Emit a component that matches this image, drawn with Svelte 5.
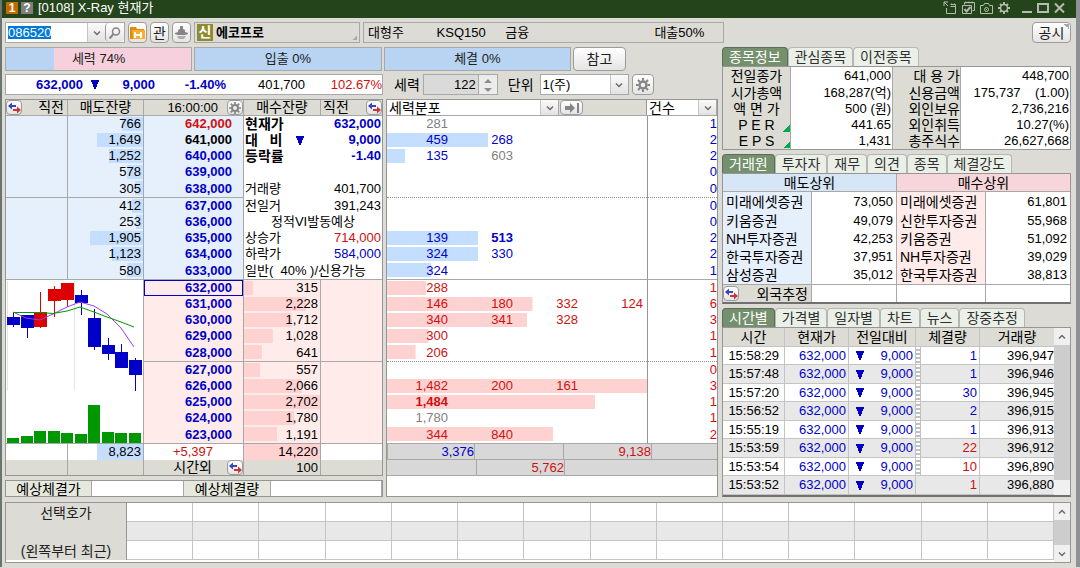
<script lang="ts">
  type Tone = 'blue' | 'red' | 'black' | 'gray';
  type Level = { price: string; qty: number; tone?: Tone };
  type DistRow = { values: string[]; bar: number; count: number; gray?: number[]; bold?: number };

  const MAX_QTY = 2702;

  const asks: Level[] = [
    { price: '642,000', qty: 766, tone: 'red' },
    { price: '641,000', qty: 1649, tone: 'black' },
    { price: '640,000', qty: 1252 },
    { price: '639,000', qty: 578 },
    { price: '638,000', qty: 305 },
    { price: '637,000', qty: 412 },
    { price: '636,000', qty: 253 },
    { price: '635,000', qty: 1905 },
    { price: '634,000', qty: 1123 },
    { price: '633,000', qty: 580 }
  ];

  const bids: Level[] = [
    { price: '632,000', qty: 315 },
    { price: '631,000', qty: 2228 },
    { price: '630,000', qty: 1712 },
    { price: '629,000', qty: 1028 },
    { price: '628,000', qty: 641 },
    { price: '627,000', qty: 557 },
    { price: '626,000', qty: 2066 },
    { price: '625,000', qty: 2702 },
    { price: '624,000', qty: 1780 },
    { price: '623,000', qty: 1191 }
  ];

  const facts: { label: string; value?: string; tone?: Tone; bold?: boolean; mark?: boolean; center?: boolean }[] = [
    { label: '현재가', value: '632,000', tone: 'blue', bold: true },
    { label: '대\u00a0\u00a0\u00a0비', value: '9,000', tone: 'blue', bold: true, mark: true },
    { label: '등락률', value: '-1.40', tone: 'blue', bold: true },
    { label: '' },
    { label: '거래량', value: '401,700' },
    { label: '전일거', value: '391,243' },
    { label: '정적VI발동예상', center: true },
    { label: '상승가', value: '714,000', tone: 'red' },
    { label: '하락가', value: '584,000', tone: 'blue' },
    { label: '일반(\u00a0 40% )/신용가능' }
  ];

  // bar is the share of the four value columns, in percent
  const dist: DistRow[] = [
    { values: ['281'], bar: 0, count: 1, gray: [0] },
    { values: ['459', '268'], bar: 39, count: 2 },
    { values: ['135', '603'], bar: 7, count: 2, gray: [1] },
    { values: [], bar: 0, count: 0 },
    { values: [], bar: 0, count: 0 },
    { values: [], bar: 0, count: 0 },
    { values: [], bar: 0, count: 0 },
    { values: ['139', '513'], bar: 35, count: 2, bold: 1 },
    { values: ['324', '330'], bar: 35, count: 2 },
    { values: ['324'], bar: 17, count: 1 },
    { values: ['288'], bar: 15, count: 1 },
    { values: ['146', '180', '332', '124'], bar: 56, count: 6 },
    { values: ['340', '341', '328'], bar: 54, count: 3 },
    { values: ['300'], bar: 16, count: 1 },
    { values: ['206'], bar: 11, count: 1 },
    { values: [], bar: 0, count: 0 },
    { values: ['1,482', '200', '161'], bar: 100, count: 3 },
    { values: ['1,484'], bar: 80, count: 1, bold: 0 },
    { values: ['1,780'], bar: 0, count: 1, gray: [0] },
    { values: ['344', '840'], bar: 64, count: 2 }
  ];

  const candles = [
    { up: false, top: 317, bottom: 325, high: 313, low: 327, vol: 438 },
    { up: false, top: 315, bottom: 328, high: 315, low: 338, vol: 436 },
    { up: true, top: 312, bottom: 327, high: 292, low: 328, vol: 431 },
    { up: true, top: 289, bottom: 301, high: 286, low: 317, vol: 431 },
    { up: true, top: 283, bottom: 300, high: 283, low: 307, vol: 433 },
    { up: false, top: 295, bottom: 303, high: 290, low: 315, vol: 434 },
    { up: false, top: 318, bottom: 347, high: 309, low: 350, vol: 405 },
    { up: false, top: 345, bottom: 354, high: 338, low: 360, vol: 432 },
    { up: false, top: 352, bottom: 368, high: 344, low: 368, vol: 433 },
    { up: false, top: 360, bottom: 375, high: 358, low: 391, vol: 433 }
  ];

  const summary = [
    ['전일종가', '641,000', '대 용 가', '448,700'],
    ['시가총액', '168,287(억)', '신용금액', '175,737\u00a0\u00a0\u00a0 (1.00)'],
    ['액 면 가', '500 (원)', '외인보유', '2,736,216'],
    ['P E R', '441.65', '외인취득', '10.27(%)'],
    ['E P S', '1,431', '총주식수', '26,627,668']
  ];

  const brokers = [
    ['미래에셋증권', '73,050', '미래에셋증권', '61,801'],
    ['키움증권', '49,079', '신한투자증권', '55,968'],
    ['NH투자증권', '42,253', '키움증권', '51,092'],
    ['한국투자증권', '37,951', 'NH투자증권', '39,029'],
    ['삼성증권', '35,012', '한국투자증권', '38,813']
  ];

  const ticks: { time: string; vol: string; total: string; tone: Tone }[] = [
    { time: '15:58:29', vol: '1', total: '396,947', tone: 'blue' },
    { time: '15:57:48', vol: '1', total: '396,946', tone: 'blue' },
    { time: '15:57:20', vol: '30', total: '396,945', tone: 'blue' },
    { time: '15:56:52', vol: '2', total: '396,915', tone: 'blue' },
    { time: '15:55:19', vol: '1', total: '396,913', tone: 'blue' },
    { time: '15:53:59', vol: '22', total: '396,912', tone: 'red' },
    { time: '15:53:54', vol: '10', total: '396,890', tone: 'red' },
    { time: '15:53:52', vol: '1', total: '396,880', tone: 'red' }
  ];

  const infoTabs = ['종목정보', '관심종목', '이전종목'];
  const brokerTabs = ['거래원', '투자자', '재무', '의견', '종목', '체결강도'];
  const tickTabs = ['시간별', '가격별', '일자별', '차트', '뉴스', '장중추정'];

  let infoTab = $state(0);
  let brokerTab = $state(0);
  let tickTab = $state(0);
  let code = $state('086520');

  const fmt = (n: number) => n.toLocaleString('en-US');
  const share = (qty: number, max = MAX_QTY) => Math.round((qty / max) * 100);
</script>

{#snippet swap(label: string)}
  <button type="button" class="btn swap" aria-label={label}>
    <svg width="13" height="12" viewBox="0 0 13 12">
      <path d="M0 4l4-3.500v2.500h4v2h-4v2.500z" fill="#3a46b8" />
      <path d="M13 8l-4-3.500v2.500h-4v2h4v2.500z" fill="#c83838" />
    </svg>
  </button>
{/snippet}

{#snippet gear(size: number)}
  <svg width={size} height={size} viewBox="0 0 14 14" fill="none" stroke="#858585">
    <circle cx="7" cy="7" r="3.500" stroke-width="2.400" />
    <path
      d="M7 0v2.500M7 11.500v2.500M0 7h2.500M11.500 7h2.500M2 2l2 2M10 10l2 2M12 2l-2 2M2 12l2-2"
      stroke-width="2"
    />
  </svg>
{/snippet}

{#snippet chevron(up = false)}
  <svg width="8" height="6" viewBox="0 0 8 6" fill="none" stroke="#6c6c6c" stroke-width="1.500">
    <path d={up ? 'M1 4.500l3-3 3 3' : 'M1 1.500l3 3 3-3'} />
  </svg>
{/snippet}

{#snippet fall()}
  <svg class="fall" width="8" height="9" viewBox="0 0 8 9" role="img" aria-label="하락">
    <path d="M0 0h8v2h-1v2h-1v3h-1v2h-2v-2h-1v-3h-1v-2h-1z" fill="#0000c8" />
  </svg>
{/snippet}

{#snippet tabs(items: string[], active: number, pick: (i: number) => void)}
  <div class="tabs" role="tablist">
    {#each items as item, i}
      <button type="button" role="tab" class="tab" class:on={i === active} aria-selected={i === active} onclick={() => pick(i)}>
        {item}
      </button>
    {/each}
  </div>
{/snippet}

{#snippet scrollbar(full: boolean)}
  <div class="scroll" aria-hidden="true">
    <span class="scroll-end">{@render chevron(true)}</span>
    <span class="thumb" class:full></span>
    {#if !full}<span class="scroll-end">{@render chevron()}</span>{/if}
  </div>
{/snippet}

<div class="window">
  <header class="titlebar">
    <span class="chip">1</span>
    <span class="chip help">?</span>
    <h1>[0108] X-Ray 현재가</h1>
    <div class="win-tools">
      <button type="button" aria-label="분리">
        <svg width="14" height="13" viewBox="0 0 14 13" fill="none" stroke="#b4bcae">
          <path d="M1 5V1h4M1 1l4 4M3.500 7v5.500h9v-9h-5M7.500 5.500h5M8.500 3.500v-1M11.500 3.500v-1" />
        </svg>
      </button>
      <button type="button" aria-label="복사">
        <svg width="13" height="13" viewBox="0 0 13 13" fill="none" stroke="#b4bcae">
          <path d="M2.500 3.500v-2h10v8h-2M4 .500v2M7 .500v2M10 .500v2M.500 4.500h9v8h-9z" />
          <path d="M2.500 8l2 2.500 4-4.500" stroke-width="2" />
        </svg>
      </button>
      <button type="button" aria-label="화면 캡처">
        <svg width="13" height="12" viewBox="0 0 13 12" fill="none" stroke="#b4bcae">
          <path d="M.500 3.500h3l1-2h4l1 2h3v8h-12z" />
          <circle cx="6.500" cy="7.500" r="2" />
          <path d="M6 7.500h1" />
        </svg>
      </button>
      <button type="button" aria-label="설정">
        <svg width="12" height="12" viewBox="0 0 12 12" fill="none" stroke="#b4bcae">
          <circle cx="6" cy="6" r="3.500" stroke-width="1.500" />
          <path d="M6 0v2.500M6 9.500v2.500M0 6h2.500M9.500 6h2.500M2 2l1.500 1.500M8.500 8.500l1.500 1.500M10 2l-1.500 1.500M2 10l1.500-1.500" stroke-width="2" />
        </svg>
      </button>
      <button type="button" class="wide" aria-label="최소화">
        <svg width="10" height="12" viewBox="0 0 10 12"><path d="M0 9h10v2h-10z" fill="#b4bcae" /></svg>
      </button>
      <button type="button" aria-label="최대화">
        <svg width="12" height="12" viewBox="0 0 12 12"><path d="M1 2h10v8h-10z" fill="none" stroke="#b4bcae" stroke-width="2" /></svg>
      </button>
      <button type="button" aria-label="닫기">
        <svg width="11" height="12" viewBox="0 0 11 12"><path d="M1 1.500l9 9M10 1.500l-9 9" stroke="#b4bcae" stroke-width="2" /></svg>
      </button>
    </div>
  </header>

  <div class="content">
    <div class="toolbar">
      <div class="combo">
        <input class="code" aria-label="종목코드" bind:value={code} />
        <button type="button" class="drop" aria-label="종목코드 목록">{@render chevron()}</button>
        <button type="button" class="btn find" aria-label="종목 찾기">
          <svg width="12" height="12" viewBox="0 0 12 12" fill="none" stroke="#858585" stroke-width="1.500">
            <circle cx="7" cy="4.500" r="3.500" />
            <path d="M4.500 7l-4 4.500" stroke-width="2" />
          </svg>
        </button>
      </div>
      <button type="button" class="btn tool" aria-label="히스토리">
        <svg width="15" height="14" viewBox="0 0 15 14">
          <path d="M0 1h6l1 2h7v10h-14z" fill="#e08a10" />
          <path d="M2 4h13v9h-12z" fill="#ffae28" />
          <path d="M5 6v6M11 6v6M6 9h4" stroke="#fff" stroke-width="2" />
        </svg>
      </button>
      <button type="button" class="btn tool">관</button>
      <button type="button" class="btn tool" aria-label="알림">
        <svg width="13" height="14" viewBox="0 0 13 14" fill="#858585">
          <path d="M5 1a1.500 1.500 0 0 1 3 0v2l2 1v2l3 1v1l-3 1h-7l-3-1v-1l3-1v-2l2-1z" />
          <path d="M2 10h9l-2 3h-5z" opacity=".6" />
        </svg>
      </button>
      <div class="name-box"><span class="new">신</span><b>에코프로</b></div>
      <div class="info-box">
        <span>대형주</span><span>KSQ150</span><span>금융</span><span>대출50%</span>
      </div>
      <button type="button" class="btn notice">공시</button>
    </div>

    <div class="columns">
      <section class="left">
        <div class="meters">
          <div class="meter strong">세력 74%</div>
          <div class="meter">입출 0%</div>
          <div class="meter">체결 0%</div>
          <button type="button" class="btn refer">참고</button>
        </div>

        <div class="split">
          <div class="quote">
            <b class="blue">632,000</b>
            {@render fall()}
            <b class="blue">9,000</b>
            <b class="blue">-1.40%</b>
            <span>401,700</span>
            <span class="red">102.67%</span>
          </div>
          <div class="controls">
            <label for="power">세력</label>
            <div class="spin">
              <input id="power" value="122" disabled />
              <span class="spin-btns">
                <svg width="8" height="14" viewBox="0 0 8 14" fill="#8d8d8d">
                  <path d="M0 5l4-4 4 4zM0 10h8l-4 4z" />
                </svg>
              </span>
            </div>
            <label for="unit">단위</label>
            <div class="pick unit">
              <select id="unit"><option>1(주)</option></select>
              <span class="drop">{@render chevron()}</span>
            </div>
            <button type="button" class="btn gear" aria-label="설정">{@render gear(14)}</button>
          </div>
        </div>

        <div class="split grow">
          <div class="stack">
            <table class="book">
              <colgroup>
                <col class="w62" /><col class="w76" /><col class="w100" /><col class="w77" /><col />
              </colgroup>
              <thead>
                <tr>
                  <th><div class="hd">{@render swap('매도 전환')}<span>직전</span></div></th>
                  <th>매도잔량</th>
                  <th><div class="hd clock"><span>16:00:00</span><button type="button" class="btn swap" aria-label="호가 설정">{@render gear(12)}</button></div></th>
                  <th>매수잔량</th>
                  <th><div class="hd tail"><span>직전</span>{@render swap('매수 전환')}</div></th>
                </tr>
              </thead>
              <tbody>
                {#each asks as row, i}
                  <tr class:group-end={i % 5 === 4}>
                    <td class="ask"></td>
                    <td class="ask bar" style="--w: {share(row.qty)}%">{fmt(row.qty)}</td>
                    <td class="ask price {row.tone ?? 'blue'}">{row.price}</td>
                    <td class="fact" class:last={i === 9} colspan="2">
                      <div class="pair {facts[i].tone ?? 'black'}" class:bold={facts[i].bold} class:center={facts[i].center}>
                        <span class="black ko">{facts[i].label}</span>
                        {#if facts[i].mark}{@render fall()}{/if}
                        {#if facts[i].value}<span class="value">{facts[i].value}</span>{/if}
                      </div>
                    </td>
                  </tr>
                {/each}
                {#each bids as row, i}
                  <tr class:group-end={i % 5 === 4}>
                    {#if i === 0}
                      <td class="chart" colspan="2" rowspan="10">
                        <svg viewBox="6 280 137 163" preserveAspectRatio="none" role="img" aria-label="일봉 차트">
                          <path d="M7.500 281v109M74.500 281v109" stroke="#e4e4e4" />
                          {#each candles as c, n}
                            {@const x = Math.round(7 + n * 13.5)}
                            <rect {x} y={c.vol} width="12" height={443 - c.vol} fill="#009800" />
                            <rect x={x + 6} y={c.high} width="1" height={c.low - c.high} fill={c.up ? '#dc0000' : '#0000c8'} />
                            <rect {x} y={c.top} width="13" height={c.bottom - c.top} fill={c.up ? '#dc0000' : '#0000c8'} />
                          {/each}
                          <path d="M13 312L26 318L40 320L53 314L67 307L80 302L94 306L107 314L121 328L134 347" fill="none" stroke="#9a40f0" />
                          <path d="M13 312.500H40L53 313.500L67 311L80 307L94 312L107 317L121 322L134 327" fill="none" stroke="#009800" />
                        </svg>
                      </td>
                    {/if}
                    <td class="bid price blue" class:current={i === 0}>{row.price}</td>
                    <td class="bid bar" style="--w: {share(row.qty)}%">{fmt(row.qty)}</td>
                    <td class="bid"></td>
                  </tr>
                {/each}
              </tbody>
              <tfoot>
                <tr>
                  <td></td>
                  <td class="bar ask-sum" style="--w: {share(8823, 14220)}%">8,823</td>
                  <td class="mid red">+5,397</td>
                  <td class="bar bid-sum" style="--w: 100%">14,220</td>
                  <td></td>
                </tr>
                <tr class="after">
                  <td></td>
                  <td></td>
                  <td><div class="hd clock"><span>시간외</span>{@render swap('시간외 전환')}</div></td>
                  <td>100</td>
                  <td></td>
                </tr>
              </tfoot>
            </table>
            <dl class="expect">
              <dt>예상체결가</dt>
              <dd></dd>
              <dt>예상체결량</dt>
              <dd></dd>
            </dl>
          </div>

          <div class="dist">
            <div class="dist-head">
              <div class="pick">
                <select aria-label="분포 종류"><option>세력분포</option></select>
                <span class="drop">{@render chevron()}</span>
              </div>
              <div class="dist-gap">
                <button type="button" class="btn jump" aria-label="끝으로">
                  <svg width="14" height="10" viewBox="0 0 14 10" fill="#858585">
                    <path d="M0 3h5v-3l5 5-5 5v-3h-5zM12 0h2v10h-2z" />
                  </svg>
                </button>
              </div>
              <div class="pick">
                <select aria-label="표시 항목"><option>건수</option></select>
                <span class="drop">{@render chevron()}</span>
              </div>
            </div>
            <table class="dist-table">
              <colgroup><col class="w65" /><col class="w65" /><col class="w65" /><col class="w65" /><col /></colgroup>
              <tbody>
                {#each dist as row, i}
                  <tr class={i < 10 ? 'blue' : 'red'} class:group-end={i % 5 === 4} class:dotted={i === 4 || i === 14}>
                    <td class="spread" colspan="4" style="--w: {row.bar}%">
                      <div class="vals">
                        {#each row.values as value, n}
                          <span class:gray={row.gray?.includes(n)} class:bold={row.bold === n}>{value}</span>
                        {/each}
                      </div>
                    </td>
                    <td class="count">{row.count}</td>
                  </tr>
                {/each}
              </tbody>
            </table>
            <div class="sums">
              <span class="blue box">3,376</span><span></span><span class="red box">9,138</span><span></span>
            </div>
            <div class="sums second"><span></span><span class="red box">5,762</span><span></span></div>
          </div>
        </div>
      </section>

      <section class="right">
        {@render tabs(infoTabs, infoTab, (i) => (infoTab = i))}
        <table class="summary">
          <colgroup><col class="w68" /><col class="w101" /><col class="w69" /><col /></colgroup>
          <tbody>
            {#each summary as [a, av, b, bv], i}
              <tr>
                <th class:more={i > 2}>{a}</th>
                <td>{av}</td>
                <th class="end">{b}</th>
                <td>{bv}</td>
              </tr>
            {/each}
          </tbody>
        </table>

        {@render tabs(brokerTabs, brokerTab, (i) => (brokerTab = i))}
        <table class="brokers">
          <colgroup><col class="w89" /><col class="w85" /><col class="w89" /><col /></colgroup>
          <thead>
            <tr><th class="sell" colspan="2">매도상위</th><th class="buy" colspan="2">매수상위</th></tr>
          </thead>
          <tbody>
            {#each brokers as [seller, sold, buyer, bought]}
              <tr>
                <th class="seller">{seller}</th>
                <td>{sold}</td>
                <th class="buyer">{buyer}</th>
                <td>{bought}</td>
              </tr>
            {/each}
          </tbody>
          <tfoot>
            <tr>
              <th><div class="hd">{@render swap('외국 전환')}<span>외국추정</span></div></th>
              <td></td>
              <td></td>
              <td></td>
            </tr>
          </tfoot>
        </table>

        {@render tabs(tickTabs, tickTab, (i) => (tickTab = i))}
        <div class="tick-box">
          <table class="ticks">
            <colgroup><col class="w62" /><col class="w64" /><col class="w67" /><col class="w64" /><col /></colgroup>
            <thead>
              <tr><th>시간</th><th>현재가</th><th>전일대비</th><th>체결량</th><th>거래량</th></tr>
            </thead>
            <tbody>
              {#each ticks as tick, i}
                <tr>
                  <td class="time">{tick.time}</td>
                  <td class="blue">632,000</td>
                  <td class="blue"><div class="diff">{@render fall()}<span>9,000</span></div></td>
                  <td class="{tick.tone} vol" class:grip={i < 7}>{tick.vol}</td>
                  <td class="total">{tick.total}</td>
                </tr>
              {/each}
            </tbody>
          </table>
          {@render scrollbar(true)}
        </div>
      </section>
    </div>

    <div class="picks">
      <table>
        <colgroup><col class="w121" /></colgroup>
        <tbody>
          {#each [0, 1, 2] as r}
            <tr>
              {#if r === 0}
                <th rowspan="3"><div class="pick-label"><span>선택호가</span><span>(왼쪽부터 최근)</span></div></th>
              {/if}
              {#each Array(14) as _}<td></td>{/each}
            </tr>
          {/each}
        </tbody>
      </table>
      {@render scrollbar(false)}
    </div>
  </div>
</div>

<style>
  :global(body) {
    background: #dcdbd6;
  }

  .window,
  .window * {
    box-sizing: border-box;
  }

  .window {
    --line: #a8a8a8;
    --edge: #969696;
    --head: #dcdcd4;
    border-left: 2px solid #6c7470;
    border-right: 4px solid #8e9294;
    background: #dcdbd6;
    font: 13px/16px 'Liberation Sans', 'Noto Sans CJK KR', sans-serif;
    color: #000;
    white-space: nowrap;
  }

  button,
  input,
  select {
    font: inherit;
    color: inherit;
    margin: 0;
    padding: 0;
    border: none;
    border-radius: 0;
    background: none;
    min-width: 0;
  }

  svg {
    display: block;
    flex: none;
  }

  .blue {
    color: #0000c8;
  }

  .red {
    color: #d01010;
  }

  .black {
    color: #000;
  }

  .gray {
    color: #808080;
  }

  .bold {
    font-weight: 700;
  }

  .ko,
  label,
  th {
    font-size: 14px;
    font-weight: 400;
  }

  .bold .ko {
    font-weight: 700;
  }

  /* title bar */
  .titlebar {
    display: flex;
    align-items: center;
    gap: 3px;
    height: 18px;
    padding: 0 11px 3px 4px;
    background: #24441c;
    color: #fff;
  }

  .chip {
    width: 12px;
    height: 12px;
    background: #c46a00;
    font-weight: 700;
    font-size: 12px;
    line-height: 12px;
    text-align: center;
  }

  .chip.help {
    background: #808080;
  }

  h1 {
    margin: 0 0 0 2px;
    font-size: 13px;
    line-height: 14px;
    font-weight: 400;
  }

  .win-tools {
    display: flex;
    gap: 5px;
    margin-left: auto;
  }

  .win-tools .wide {
    margin-left: 7px;
  }

  .content {
    display: flex;
    flex-direction: column;
    padding: 4px 5px 4px 3px;
  }

  .btn {
    display: inline-flex;
    align-items: center;
    justify-content: center;
    border: 1px solid #9c9c9c;
    border-radius: 4px;
    background: linear-gradient(#fff, #e4e4e4);
    color: #202020;
  }

  /* toolbar */
  .toolbar {
    display: flex;
    gap: 3px;
    height: 21px;
    margin-bottom: 4px;
    font-size: 14px;
  }

  .combo {
    display: flex;
    width: 120px;
    background: #fff;
    border: 1px solid var(--line);
  }

  .code {
    flex: 1;
    padding-left: 2px;
    color: #fff;
    font-size: 13px;
    background: linear-gradient(#0078d7, #0078d7) 2px 3px / 43px 13px no-repeat #fff;
  }

  .drop {
    display: flex;
    align-items: center;
    justify-content: center;
    width: 18px;
    background: linear-gradient(#fafafa, #e2e2e2);
    border-left: 1px solid #c4c4c4;
  }

  .find {
    width: 19px;
    border-width: 0 0 0 1px;
  }

  .tool {
    width: 19px;
  }

  .name-box {
    display: flex;
    align-items: center;
    gap: 3px;
    width: 166px;
    padding-left: 2px;
    border: 1px solid var(--line);
    background: linear-gradient(135deg, transparent 50%, #a8a8a8 50%) right 2px bottom 2px / 4px 4px no-repeat;
  }

  .name-box b {
    font-size: 13px;
  }

  .new {
    width: 16px;
    height: 17px;
    background: #8f8a30;
    color: #fff;
    line-height: 16px;
    text-align: center;
    font-weight: 700;
  }

  .info-box {
    display: grid;
    grid-template-columns: 69fr 69fr 150fr 69fr;
    align-items: center;
    flex: 0 1 361px;
    padding-left: 4px;
    border: 1px solid var(--line);
    font-size: 13px;
  }

  .notice {
    width: 39px;
    margin-left: auto;
    background:
      linear-gradient(45deg, transparent 50%, #a8a8a8 50%) right 1px top 1px / 5px 5px no-repeat,
      linear-gradient(#fff, #e4e4e4);
  }

  .columns {
    display: grid;
    grid-template-columns: minmax(0, 713fr) minmax(0, 349fr);
    gap: 4px;
  }

  .left {
    display: flex;
    flex-direction: column;
  }

  .meters {
    display: flex;
    gap: 2px;
    height: 24px;
    padding-right: 92px;
    margin-bottom: 3px;
  }

  .meter {
    flex: 1;
    border: 1px solid var(--line);
    background: #b8d4f2;
    line-height: 21px;
    font-size: 13px;
    text-align: center;
    color: #202020;
  }

  .meter.strong {
    background: linear-gradient(90deg, #b8d4f2 26%, #f6d0dc 26%);
  }

  .refer {
    width: 53px;
    font-size: 14px;
  }

  .split {
    display: grid;
    grid-template-columns: minmax(0, 378fr) minmax(0, 332fr);
    gap: 3px;
    margin-bottom: 4px;
  }

  .split.grow {
    flex: 1;
    margin-bottom: 0;
  }

  .quote {
    display: grid;
    grid-template-columns: 77fr 16fr 56fr 71fr 79fr 77fr;
    align-items: center;
    height: 21px;
    border: 1px solid var(--line);
    background: #fff;
    text-align: right;
  }

  .quote .fall {
    justify-self: end;
  }

  .controls {
    display: flex;
    align-items: center;
    height: 21px;
    padding-left: 8px;
  }

  .spin {
    display: flex;
    width: 75px;
    height: 21px;
    margin: 0 10px 0 3px;
    border: 1px solid var(--line);
    background: #dadada;
  }

  .spin input {
    flex: 1;
    padding-right: 2px;
    text-align: right;
  }

  .spin-btns {
    display: flex;
    align-items: center;
    justify-content: center;
    width: 19px;
    border-left: 1px solid var(--line);
    background: #ececec;
  }

  .pick {
    display: flex;
    background: #fff;
    border: 1px solid var(--line);
  }

  .pick select {
    flex: 1;
    appearance: none;
    padding-left: 2px;
    font-size: 14px;
    line-height: 14px;
  }

  .pick.unit {
    width: 89px;
    height: 21px;
    margin: 0 3px 0 6px;
  }

  .pick.unit select {
    font-size: 13px;
  }

  .gear {
    width: 22px;
    height: 21px;
  }

  .stack {
    display: flex;
    flex-direction: column;
    gap: 4px;
  }

  /* tables */
  table {
    width: 100%;
    table-layout: fixed;
    border-collapse: separate;
    border-spacing: 0;
  }

  th,
  td {
    padding: 0;
    overflow: hidden;
  }

  .w62 { width: 62px; }
  .w64 { width: 64px; }
  .w65 { width: 65px; }
  .w67 { width: 67px; }
  .w68 { width: 68px; }
  .w69 { width: 69px; }
  .w76 { width: 76px; }
  .w77 { width: 77px; }
  .w85 { width: 85px; }
  .w89 { width: 89px; }
  .w100 { width: 100px; }
  .w101 { width: 101px; }
  .w121 { width: 121px; }

  .book {
    border: 1px solid var(--edge);
    background: #fff;
    text-align: right;
  }

  .book th {
    height: 16px;
    line-height: 15px;
    background: var(--head);
    border-bottom: 1px solid var(--line);
    border-right: 1px solid var(--line);
    text-align: center;
  }

  .book td {
    height: 16px;
    border-right: 1px solid var(--line);
  }

  .book th:last-child,
  .book td:last-child {
    border-right: none;
  }

  .group-end td {
    height: 18px;
    border-bottom: 1px solid var(--line);
  }

  .group-end .fact:not(.last) {
    border-bottom: none;
  }

  .hd {
    display: flex;
    align-items: center;
    justify-content: space-between;
    height: 15px;
    padding-right: 3px;
  }

  .hd.clock {
    justify-content: flex-end;
    gap: 9px;
    padding-right: 0;
  }

  .book th .hd.clock {
    font-size: 13px;
  }

  .hd.tail {
    padding: 0 0 0 2px;
  }

  .swap {
    width: 16px;
    height: 15px;
  }

  .book .ask {
    background-color: #e6effc;
  }

  .book .bid {
    background-color: #ffecea;
  }

  .book .bar {
    padding-right: 2px;
    background-image: linear-gradient(#c4deff, #c4deff);
    background-repeat: no-repeat;
    background-position: right 1px;
    background-size: var(--w) 14px;
  }

  .book .bid.bar,
  .book .bid-sum {
    background-image: linear-gradient(#ffd2d2, #ffd2d2);
    background-position: left 1px;
  }

  .book .price {
    padding-right: 11px;
    font-weight: 700;
  }

  .book .current {
    box-shadow: inset 0 0 0 1px #0000c8;
  }

  .pair {
    display: flex;
    justify-content: space-between;
    align-items: center;
    height: 16px;
    padding: 0 1px;
  }

  .pair.center {
    justify-content: center;
  }

  .pair .fall {
    margin-left: 12px;
  }

  .pair .fall + .value {
    flex: 0 0 76px;
  }

  .pair:not(.bold) .ko {
    font-size: 13px;
  }

  .book .chart {
    height: 164px;
    border-bottom: 1px solid var(--line);
  }

  .chart svg {
    width: 100%;
    height: 163px;
  }

  .book .mid {
    padding-right: 30px;
  }

  .book tfoot .bar {
    background-size: var(--w) 16px;
    background-position-y: 0;
  }

  .book .after td {
    height: 15px;
    line-height: 15px;
    padding-right: 2px;
    background: var(--head);
  }

  .book .after td:nth-child(3) {
    padding-right: 0;
    font-size: 14px;
  }

  .after .hd.clock {
    gap: 15px;
  }

  .expect {
    display: grid;
    grid-template-columns: 86fr 92fr 87fr 111fr;
    height: 17px;
    margin: 0;
    border: 1px solid var(--edge);
    background: #fff;
  }

  .expect dt {
    overflow: hidden;
    background: #e6e8de;
    border-right: 1px solid var(--line);
    font-size: 14px;
    line-height: 17px;
    text-align: center;
  }

  .expect dd {
    margin: 0;
    border-right: 1px solid var(--line);
  }

  /* distribution */
  .dist {
    border: 1px solid var(--edge);
    background: #fff;
  }

  .dist-head {
    display: grid;
    grid-template-columns: 172fr 88fr 70fr;
    height: 16px;
    background: var(--head);
    border-bottom: 1px solid var(--line);
  }

  .dist-head .pick {
    border-width: 0 1px 0 0;
  }

  .dist-gap {
    display: flex;
    border-right: 1px solid var(--edge);
  }

  .jump {
    width: 23px;
    margin-left: 1px;
  }

  .dist-table {
    text-align: right;
  }

  .dist-table td {
    height: 16px;
  }

  .dist-table .group-end td {
    height: 18px;
  }

  .dist-table .dotted td {
    border-bottom: 1px dotted #909090;
  }

  .spread {
    background: linear-gradient(#c4deff, #c4deff) 0 1px / var(--w) 14px no-repeat;
  }

  .red .spread {
    background-image: linear-gradient(#ffd2d2, #ffd2d2);
  }

  .vals {
    display: grid;
    grid-template-columns: repeat(4, 1fr);
    height: 16px;
  }

  .vals span {
    padding-right: 4px;
  }

  .dist-table .count {
    border-left: 1px solid var(--edge);
  }

  .sums {
    display: grid;
    grid-template-columns: 88fr 88fr 89fr 65fr;
    height: 16px;
    background: #d8d8d8;
    border-bottom: 1px solid var(--line);
    text-align: right;
    line-height: 15px;
  }

  .sums.second {
    grid-template-columns: 89fr 89fr 152fr;
  }

  .sums .box {
    border: 1px solid var(--line);
    border-width: 0 1px;
  }

  /* right column */
  .right {
    display: flex;
    flex-direction: column;
  }

  .tabs {
    display: flex;
    height: 19px;
  }

  .tab {
    height: 19px;
    padding: 0 6px;
    border: 1px solid #b4b8b0;
    border-bottom: none;
    border-radius: 4px 4px 0 0;
    background: #eaf0e8;
    color: #303030;
    font-size: 14px;
    line-height: 17px;
  }

  .tab.on {
    border-color: #5c6c56;
    background: #74906c;
    color: #fff;
  }

  .summary,
  .brokers {
    border: 1px solid var(--edge);
    background: #fff;
    text-align: right;
    margin-bottom: 4px;
  }

  .summary th {
    background: var(--head);
    border-right: 1px solid var(--line);
    text-align: center;
    line-height: 16px;
  }

  .summary th.end {
    text-align: right;
    border-left: 1px solid var(--line);
  }

  .summary th.more {
    background: linear-gradient(135deg, transparent 50%, #00a850 50%) right bottom 1px / 7px 7px no-repeat var(--head);
  }

  .summary td {
    height: 16px;
    padding-right: 1px;
  }

  .summary tr:nth-child(-n + 2) td {
    height: 17px;
  }

  .brokers {
    border-bottom: 2px solid #707070;
    margin-bottom: 4px;
  }

  .brokers thead th {
    height: 18px;
    border-bottom: 1px solid var(--line);
    text-align: center;
    line-height: 16px;
  }

  .brokers .sell {
    background: #d6e6f6;
    border-right: 1px solid var(--line);
  }

  .brokers .buy {
    background: #f6d6da;
  }

  .brokers tbody th {
    padding-left: 3px;
    font-size: 14px;
    text-align: left;
  }

  .brokers tbody :is(th, td) {
    height: 18px;
    line-height: 18px;
    border-right: 1px solid var(--line);
  }

  .brokers tbody tr:first-child :is(th, td) {
    height: 20px;
  }

  .brokers td {
    padding-right: 3px;
  }

  .brokers .seller {
    background: #e6effc;
  }

  .brokers .buyer {
    background: #ffecea;
  }

  .brokers tbody tr td:last-child,
  .brokers tfoot tr td:last-child {
    border-right: none;
  }

  .brokers tfoot :is(th, td) {
    height: 18px;
    border-top: 1px solid var(--line);
    border-right: 1px solid var(--line);
  }

  .brokers tfoot th {
    background: var(--head);
  }

  .tick-box {
    display: flex;
    flex: 1;
    border: 1px solid var(--edge);
    border-bottom: 2px solid #707070;
    background: #fff;
  }

  .ticks {
    flex: 1;
    align-self: flex-start;
    min-width: 0;
    text-align: right;
  }

  .ticks th {
    height: 19px;
    background: var(--head);
    border-right: 1px solid #c4c4c4;
    border-bottom: 1px solid #c4c4c4;
    text-align: center;
    line-height: 17px;
  }

  .ticks td {
    height: 18px;
    padding-right: 2px;
    border-right: 1px solid #c4c4c4;
    border-bottom: 1px solid #c4c4c4;
  }

  .ticks tr :is(th, td):last-child {
    border-right: none;
  }

  .ticks tbody tr:nth-child(even) td {
    height: 19px;
    background-color: #e8e8e8;
  }

  .ticks .time {
    padding-right: 5px;
  }

  .ticks .total {
    padding-right: 0;
  }

  .ticks .grip {
    background-image:
      linear-gradient(90deg, transparent 4px, #c0c0c0 4px 5px),
      repeating-linear-gradient(#fff 0 2px, #c0c0c0 2px 4px);
    background-repeat: no-repeat;
    background-size: 5px 100%;
  }

  .diff {
    display: flex;
    align-items: center;
    justify-content: space-between;
    padding-left: 7px;
  }

  .scroll {
    display: flex;
    flex-direction: column;
    width: 16px;
    background: #f0f0f0;
  }

  .scroll-end {
    display: flex;
    align-items: center;
    justify-content: center;
    height: 17px;
  }

  .thumb {
    flex: 1;
    background: #cdcdcd;
  }

  .thumb.full {
    flex: 0 1 135px;
  }

  .picks {
    display: flex;
    margin-top: 5px;
    border: 1px solid var(--edge);
    background: #fff;
  }

  .picks td {
    height: 19px;
    border-right: 1px solid #c4c4c4;
    border-bottom: 1px solid #c4c4c4;
  }

  .picks tr:nth-child(2) td {
    background: #e8e8e8;
  }

  .picks table {
    margin-bottom: 2px;
  }

  .picks th {
    background: #dcdbd6;
    border-right: 1px solid var(--edge);
  }

  .pick-label {
    display: flex;
    flex-direction: column;
    align-items: center;
    justify-content: space-between;
    height: 57px;
    padding: 2px 0 1px;
    color: #202020;
  }
</style>
